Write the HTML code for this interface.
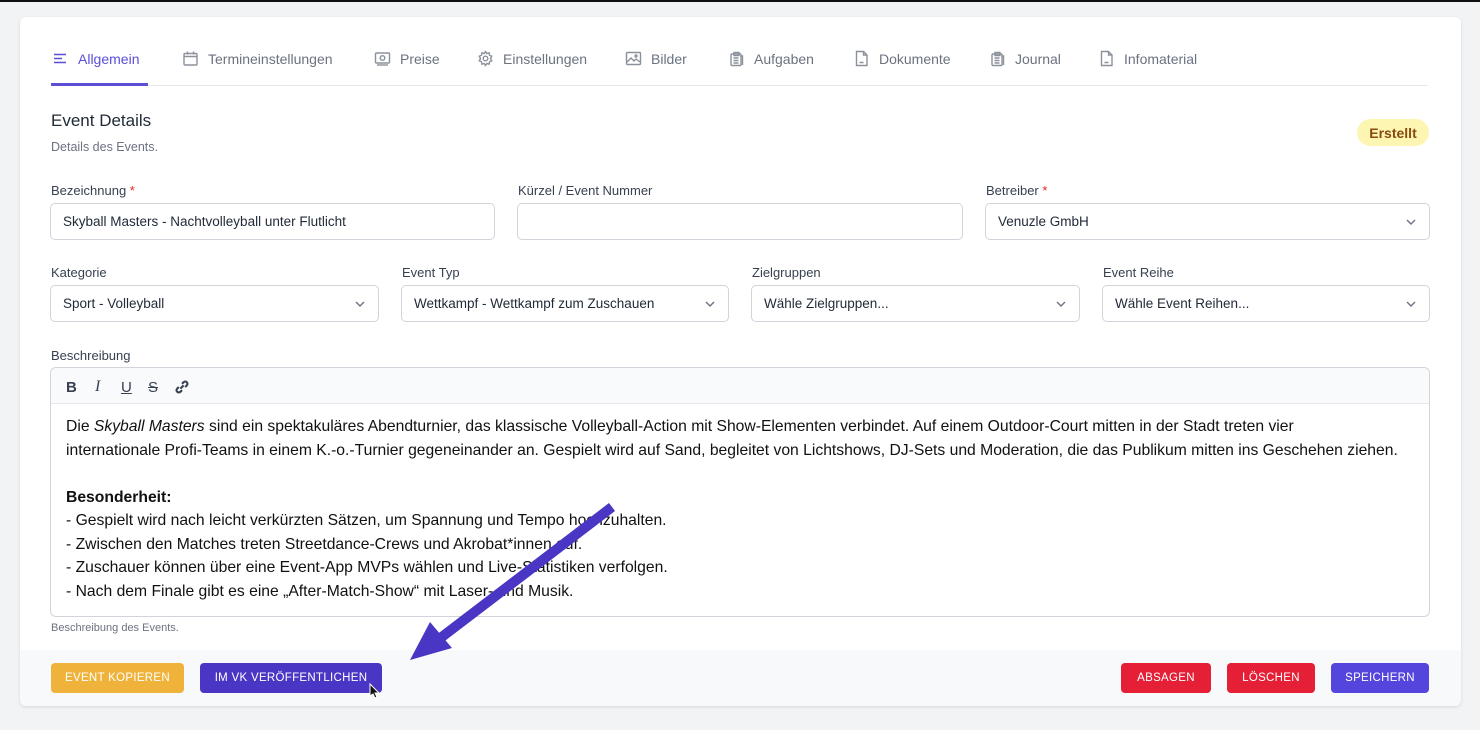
<!DOCTYPE html>
<html><head><meta charset="utf-8"><style>
*{box-sizing:border-box;margin:0;padding:0}
body{width:1480px;height:730px;background:#f2f3f5;font-family:"Liberation Sans",sans-serif;position:relative;overflow:hidden;color:#1f2937}
.a{position:absolute}
.topline{left:0;top:0;width:1480px;height:2px;background:#111}
.card{left:20px;top:17px;width:1441px;height:689px;background:#fff;border-radius:6px;box-shadow:0 1px 3px rgba(0,0,0,.12)}
.footer{left:20px;top:650px;width:1441px;height:56px;background:#f8f9fb;border-radius:0 0 6px 6px}
.tab{top:50px;font-size:14px;color:#6b7280;display:flex;align-items:center;gap:9px;white-space:nowrap}
.tab svg{width:17px;height:17px;fill:none;stroke:#8b919b;stroke-width:1.4}
.lbl{font-size:13px;color:#374151}
.lbl i{color:#e02424;font-style:normal}
.inp{height:37px;border:1px solid #d1d5db;border-radius:5px;background:#fff;font-size:13.5px;color:#1f2937;padding:0 12px;display:flex;align-items:center;justify-content:space-between;white-space:nowrap}
.inp svg{width:12px;height:12px}
.btn{height:30px;top:663px;border-radius:4px;color:#fff;font-size:11.5px;display:flex;align-items:center;justify-content:center;letter-spacing:.3px}
.desc{font-size:15.7px;line-height:23.5px;color:#111;white-space:nowrap}
</style></head><body>
<div class="a topline"></div>
<div class="a card"></div>
<div class="a footer"></div>

<div class="a tab" style="left:52px;color:#5a4fd6"><svg viewBox="0 0 17 17" style="stroke:#5a4fd6"><path d="M2 4.5h12M2 8.5h8M2 12.5h12"/></svg>Allgemein</div>
<div class="a tab" style="left:182px"><svg viewBox="0 0 17 17"><rect x="2" y="3.5" width="13" height="11.5" rx="1"/><path d="M2 6.5h13M5.5 1.5v3M11.5 1.5v3"/></svg>Termineinstellungen</div>
<div class="a tab" style="left:374px"><svg viewBox="0 0 17 17"><rect x="1.5" y="3" width="14" height="10" rx="1"/><circle cx="8.5" cy="8" r="2.3"/><path d="M3 15h11"/></svg>Preise</div>
<div class="a tab" style="left:477px"><svg viewBox="0 0 17 17"><circle cx="8.5" cy="8.5" r="2.3"/><path d="M8.5 1.5l1.3 2 2.3-.7.4 2.4 2.2 1-1.2 2.3 1.2 2.3-2.2 1-.4 2.4-2.3-.7-1.3 2-1.3-2-2.3.7-.4-2.4-2.2-1 1.2-2.3-1.2-2.3 2.2-1 .4-2.4 2.3.7z"/></svg>Einstellungen</div>
<div class="a tab" style="left:625px"><svg viewBox="0 0 17 17"><rect x="1.5" y="2.5" width="14" height="12" rx="1"/><path d="M2 12l4-4 3 3 2-2 4 3"/><circle cx="11" cy="6" r="1"/></svg>Bilder</div>
<div class="a tab" style="left:728px"><svg viewBox="0 0 17 17"><rect x="3" y="4" width="10" height="11.5" rx="1"/><path d="M6 2.5h5v3H6zM5.5 8h5M5.5 10.5h5M5.5 13h5M13 6h1.5v9"/></svg>Aufgaben</div>
<div class="a tab" style="left:853px"><svg viewBox="0 0 17 17"><path d="M3.5 1.5h7l3.5 3.5v10.5h-10.5z M10.5 1.5v3.5h3.5M6.5 12.5h4"/></svg>Dokumente</div>
<div class="a tab" style="left:989px"><svg viewBox="0 0 17 17"><rect x="3" y="4" width="10" height="11.5" rx="1"/><path d="M6 2.5h5v3H6zM5.5 8h5M5.5 10.5h5M5.5 13h5M13 6h1.5v9"/></svg>Journal</div>
<div class="a tab" style="left:1098px"><svg viewBox="0 0 17 17"><path d="M3.5 1.5h7l3.5 3.5v10.5h-10.5z M10.5 1.5v3.5h3.5M6.5 12.5h4"/></svg>Infomaterial</div>
<div class="a" style="left:51px;top:85px;width:1377px;height:1px;background:#e5e7eb"></div>
<div class="a" style="left:51px;top:83px;width:97px;height:3px;background:#5a4fd6"></div>

<div class="a" style="left:51px;top:111px;font-size:17px;color:#1f2937">Event Details</div>
<div class="a" style="left:51px;top:140px;font-size:12.5px;color:#6b7280">Details des Events.</div>
<div class="a" style="left:1357px;top:119px;width:72px;height:27px;border-radius:14px;background:#fdf6b2;color:#8a4a12;font-weight:bold;font-size:14px;display:flex;align-items:center;justify-content:center">Erstellt</div>

<div class="a lbl" style="left:51px;top:183px">Bezeichnung <i>*</i></div>
<div class="a lbl" style="left:518px;top:183px">Kürzel / Event Nummer</div>
<div class="a lbl" style="left:986px;top:183px">Betreiber <i>*</i></div>
<div class="a inp" style="left:50px;top:203px;width:445px">Skyball Masters - Nachtvolleyball unter Flutlicht</div>
<div class="a inp" style="left:517px;top:203px;width:446px"></div>
<div class="a inp" style="left:985px;top:203px;width:445px">Venuzle GmbH<svg viewBox="0 0 12 12"><path d="M2 4l4 4 4-4" fill="none" stroke="#6b7280" stroke-width="1.4"/></svg></div>

<div class="a lbl" style="left:51px;top:265px">Kategorie</div>
<div class="a lbl" style="left:402px;top:265px">Event Typ</div>
<div class="a lbl" style="left:752px;top:265px">Zielgruppen</div>
<div class="a lbl" style="left:1103px;top:265px">Event Reihe</div>
<div class="a inp" style="left:50px;top:285px;width:329px">Sport - Volleyball<svg viewBox="0 0 12 12"><path d="M2 4l4 4 4-4" fill="none" stroke="#6b7280" stroke-width="1.4"/></svg></div>
<div class="a inp" style="left:401px;top:285px;width:328px">Wettkampf - Wettkampf zum Zuschauen<svg viewBox="0 0 12 12"><path d="M2 4l4 4 4-4" fill="none" stroke="#6b7280" stroke-width="1.4"/></svg></div>
<div class="a inp" style="left:751px;top:285px;width:329px">Wähle Zielgruppen...<svg viewBox="0 0 12 12"><path d="M2 4l4 4 4-4" fill="none" stroke="#6b7280" stroke-width="1.4"/></svg></div>
<div class="a inp" style="left:1102px;top:285px;width:328px">Wähle Event Reihen...<svg viewBox="0 0 12 12"><path d="M2 4l4 4 4-4" fill="none" stroke="#6b7280" stroke-width="1.4"/></svg></div>

<div class="a lbl" style="left:51px;top:348px">Beschreibung</div>
<div class="a" style="left:50px;top:367px;width:1380px;height:250px;border:1px solid #d1d5db;border-radius:6px;overflow:hidden">
  <div style="height:36px;background:#f9fafb;border-bottom:1px solid #e5e7eb;position:relative;font-size:15px;color:#374151">
    <span class="a" style="left:15px;top:11px;font-weight:bold">B</span>
    <span class="a" style="left:44px;top:10px;font-style:italic;font-family:'Liberation Serif',serif;font-size:16px">I</span>
    <span class="a" style="left:70px;top:11px;text-decoration:underline">U</span>
    <span class="a" style="left:97px;top:11px;text-decoration:line-through">S</span>
    <svg class="a" style="left:123px;top:11px" width="16" height="16" viewBox="0 0 15 15" fill="none" stroke="#374151" stroke-width="2"><path d="M6 9l3-3M4.5 7.5l-1.5 1.5a2 2 0 003 3l1.5-1.5M10.5 7.5l1.5-1.5a2 2 0 00-3-3L7.5 4.5"/></svg>
  </div>
  <div class="desc" style="padding:11px 15px 0">
    <div>Die <i>Skyball Masters</i> sind ein spektakuläres Abendturnier, das klassische Volleyball-Action mit Show-Elementen verbindet. Auf einem Outdoor-Court mitten in der Stadt treten vier</div>
    <div>internationale Profi-Teams in einem K.-o.-Turnier gegeneinander an. Gespielt wird auf Sand, begleitet von Lichtshows, DJ-Sets und Moderation, die das Publikum mitten ins Geschehen ziehen.</div>
    <div>&nbsp;</div>
    <div><b>Besonderheit:</b></div>
    <div>- Gespielt wird nach leicht verkürzten Sätzen, um Spannung und Tempo hochzuhalten.</div>
    <div>- Zwischen den Matches treten Streetdance-Crews und Akrobat*innen auf.</div>
    <div>- Zuschauer können über eine Event-App MVPs wählen und Live-Statistiken verfolgen.</div>
    <div>- Nach dem Finale gibt es eine „After-Match-Show“ mit Laser- und Musik.</div>
  </div>
</div>
<div class="a" style="left:51px;top:622px;font-size:11px;color:#6b7280">Beschreibung des Events.</div>

<div class="a btn" style="left:51px;width:133px;background:#efb33b">EVENT KOPIEREN</div>
<div class="a btn" style="left:200px;width:182px;background:#4a36c4">IM VK VERÖFFENTLICHEN</div>
<div class="a btn" style="left:1121px;width:90px;background:#e41f36">ABSAGEN</div>
<div class="a btn" style="left:1227px;width:88px;background:#e41f36">LÖSCHEN</div>
<div class="a btn" style="left:1331px;width:98px;background:#5446dc">SPEICHERN</div>

<svg class="a" style="left:0;top:0" width="1480" height="730">
  <line x1="612" y1="507" x2="430" y2="646" stroke="#4a36c4" stroke-width="10"/>
  <polygon points="410,660 430,622 452,648" fill="#4a36c4"/>
  <path d="M370 684v12l3-2 2 4 2-1-2-4h4z" fill="#111" stroke="#fff" stroke-width="1"/>
</svg>
</body></html>
